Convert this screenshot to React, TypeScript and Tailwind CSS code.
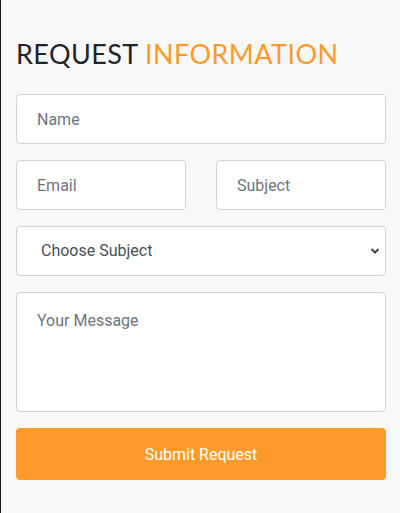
import React from "react";

export default function App() {
  const input =
    "w-full h-[50px] bg-white border border-[#ced4da] rounded-[4px] px-5 text-[16px] text-[#495057] placeholder:text-[#6c757d] outline-none";
  return (
    <div className="min-h-[513px] w-[400px] bg-[#f8f8f8] border-l-[1px] border-[#1a1a1a] font-['Roboto',sans-serif]">
      <div className="pl-[15px] pr-[14px] pt-[37px]">
        <h2 className="text-[27px] leading-[34px] font-normal tracking-[0.4px] font-['Lato',sans-serif] text-[#212529]">
          REQUEST <span className="text-[#fd9a2a]">INFORMATION</span>
        </h2>
        <form className="mt-[23px] flex flex-col gap-4">
          <input className={input} placeholder="Name" />
          <div className="grid grid-cols-2 gap-[30px]">
            <input className={input} placeholder="Email" />
            <input className={input} placeholder="Subject" />
          </div>
          <div className="relative">
            <select className="w-full h-[50px] bg-white border border-[#ced4da] rounded-[4px] pl-6 pr-8 text-[16px] text-[#495057] appearance-none outline-none">
              <option>Choose Subject</option>
            </select>
            <svg
              className="absolute right-[6px] top-[21px] pointer-events-none"
              width="10"
              height="8"
              viewBox="0 0 10 8"
            >
              <path d="M1.5 2 L5 5.5 L8.5 2" fill="none" stroke="#3d4450" strokeWidth="2" />
            </svg>
          </div>
          <textarea
            className="w-full h-[120px] bg-white border border-[#ced4da] rounded-[4px] px-5 pt-[16px] text-[16px] text-[#495057] placeholder:text-[#6c757d] outline-none resize-none"
            placeholder="Your Message"
          />
          <button
            type="button"
            className="w-full h-[52px] pt-[2px] bg-[#fd9a2a] rounded-[4px] text-white text-[16px]"
          >
            Submit Request
          </button>
        </form>
      </div>
    </div>
  );
}
